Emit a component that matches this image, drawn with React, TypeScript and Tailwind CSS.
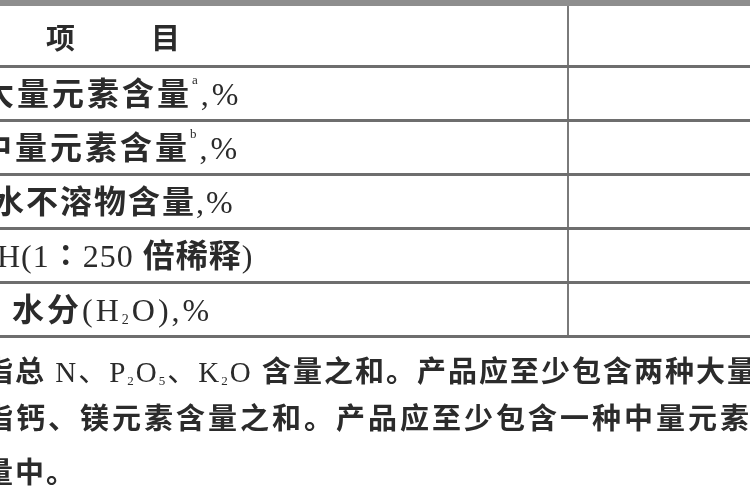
import * as React from "react";

type Row = {
  id: string;
  offset: string;
  content: React.ReactNode;
};

const Latin = ({ children }: { children: React.ReactNode }) => (
  <span className="font-normal">{children}</span>
);

const rows: Row[] = [
  {
    id: "major",
    offset: "ml-[-18px] tracking-[3px]",
    content: (
      <>
        大量元素含量<sup className="text-[13px] font-normal align-[14px]">a</sup>
        <Latin>,%</Latin>
      </>
    ),
  },
  {
    id: "medium",
    offset: "ml-[-20px] tracking-[3px]",
    content: (
      <>
        中量元素含量<sup className="text-[13px] font-normal align-[14px]">b</sup>
        <Latin>,%</Latin>
      </>
    ),
  },
  {
    id: "insoluble",
    offset: "ml-[-8px] tracking-[2px]",
    content: (
      <>
        水不溶物含量<Latin>,%</Latin>
      </>
    ),
  },
  {
    id: "ph",
    offset: "ml-[-20px] tracking-[1px]",
    content: (
      <>
        <Latin>pH(1</Latin>∶<Latin>250 </Latin>倍稀释<Latin>)</Latin>
      </>
    ),
  },
  {
    id: "water",
    offset: "ml-[12px] tracking-[3px]",
    content: (
      <>
        水分
        <Latin>
          (H<sub className="text-[14px]">2</sub>O),%
        </Latin>
      </>
    ),
  },
];

export default function App() {
  return (
    <div className="h-[500px] w-[750px] overflow-hidden bg-white font-['Liberation_Serif','Noto_Sans_CJK_SC',serif] text-[#2b2b2b] blur-[0.5px]">
      <div className="h-[6px] bg-[#8e8e8e]" />
      <div className="flex h-[62px] border-b-[3px] border-[#6e6e6e]">
        <div className="flex w-[569px] shrink-0 items-center border-r-2 border-[#7a7a7a] pt-2 text-[29px] font-semibold">
          <span className="ml-[46px]">项</span>
          <span className="ml-[76px]">目</span>
        </div>
        <div className="flex-1" />
      </div>
      {rows.map((row) => (
        <div key={row.id} className="flex h-[54px] border-b-[3px] border-[#6e6e6e]">
          <div className="flex w-[569px] shrink-0 items-center overflow-hidden border-r-2 border-[#7a7a7a] text-[32px] font-semibold">
            <span className={`whitespace-pre ${row.offset}`}>{row.content}</span>
          </div>
          <div className="flex-1" />
        </div>
      ))}
      <div className="mt-[17px] whitespace-nowrap text-[29px] font-semibold leading-[34px]">
        <p className="ml-[-16px] tracking-[2px]">
          指总{" "}
          <Latin>
            N、P<sub className="text-[13px]">2</sub>O<sub className="text-[13px]">5</sub>、K
            <sub className="text-[13px]">2</sub>O
          </Latin>{" "}
          含量之和。产品应至少包含两种大量
        </p>
        <p className="ml-[-16px] mt-[13px] tracking-[3px]">指钙、镁元素含量之和。产品应至少包含一种中量元素</p>
        <p className="ml-[-16px] mt-[20px] tracking-[2px]">量中。</p>
      </div>
    </div>
  );
}
